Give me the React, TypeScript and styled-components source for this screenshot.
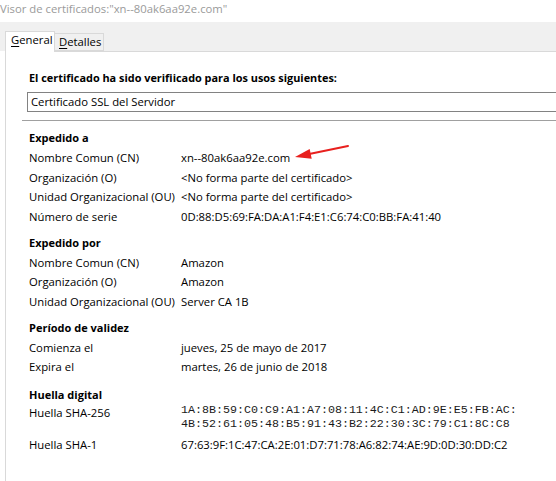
import React from "react";
import styled, { createGlobalStyle } from "styled-components";

const GlobalStyle = createGlobalStyle`
  html, body { margin: 0; padding: 0; background: #ffffff; overflow: hidden; }
  body { font-family: "Open Sans", "Liberation Sans", sans-serif; font-size: 11.3px; color: #000; }
`;

const Window = styled.div`
  position: relative;
  width: 100%;
  height: 481px;
  overflow: hidden;
  display: flex;
  flex-direction: column;
  background: #ffffff;
`;

const TitleBar = styled.div`
  height: 22px;
  line-height: 18px;
  color: #9a9a9a;
  white-space: nowrap;
`;

const TabStrip = styled.div`
  height: 29px;
  background: #f0f0f0;
  display: flex;
  align-items: flex-end;
  padding-left: 5px;
`;

const Tab = styled.div<{ $active?: boolean; $w: number }>`
  position: relative;
  z-index: ${(p) => (p.$active ? 1 : 0)};
  box-sizing: border-box;
  width: ${(p) => p.$w}px;
  height: ${(p) => (p.$active ? 21 : 18)}px;
  margin-bottom: ${(p) => (p.$active ? -1 : 0)}px;
  background: ${(p) => (p.$active ? "#ffffff" : "#f0f0f0")};
  border: 1px solid #d9d9d9;
  border-bottom: ${(p) => (p.$active ? "none" : "1px solid #d9d9d9")};
  border-left: ${(p) => (p.$active ? "1px solid #d9d9d9" : "none")};
  padding-left: ${(p) => (p.$active ? 5 : 4)}px;
  line-height: 16px;
  white-space: nowrap;
  u { text-decoration: underline; text-underline-offset: 2px; }
`;

const Panel = styled.div`
  flex: 1;
  margin-left: 5px;
  border-left: 1px solid #d9d9d9;
  border-top: 1px solid #d9d9d9;
  padding: 16px 0 0 23px;
  display: flex;
  flex-direction: column;
`;

const Purpose = styled.div`
  font-weight: 700;
  font-size: 10.9px;
  line-height: 20px;
  white-space: nowrap;
`;

const PurposeBox = styled.div`
  margin-top: 4px;
  margin-left: -2px;
  height: 20px;
  box-sizing: border-box;
  border: 1px solid #828282;
  border-right: none;
  padding-left: 3px;
  line-height: 18px;
`;

const Divider = styled.div`
  margin-top: 8px;
  margin-left: -7px;
  height: 1px;
  background: #a0a0a0;
`;

const Section = styled.div<{ $top: number }>`
  margin-top: ${(p) => p.$top}px;
  display: flex;
  flex-direction: column;
`;

const Heading = styled.div`
  font-weight: 700;
  font-size: 11px;
  line-height: 20px;
  height: 20px;
`;

const Rows = styled.div<{ $shift?: number }>`
  display: flex;
  flex-direction: column;
  margin-top: ${(p) => p.$shift ?? 0}px;
`;

const Row = styled.div<{ $h?: number }>`
  display: grid;
  grid-template-columns: 152px 1fr;
  align-items: start;
  height: ${(p) => p.$h ?? 19.67}px;
  line-height: 20px;
  white-space: nowrap;
`;

const Label = styled.span``;
const Value = styled.span``;

const Mono = styled.span`
  font-family: "Liberation Mono", "Courier New", monospace;
  font-size: 11.67px;
  line-height: 14px;
  white-space: pre;
  color: #1a1a1a;
`;

const Arrow = styled.svg`
  position: absolute;
  left: 290px;
  top: 140px;
`;

type Item = [string, string];

const issuedTo: Item[] = [
  ["Nombre Comun (CN)", "xn--80ak6aa92e.com"],
  ["Organización (O)", "<No forma parte del certificado>"],
  ["Unidad Organizacional (OU)", "<No forma parte del certificado>"],
  ["Número de serie", "0D:88:D5:69:FA:DA:A1:F4:E1:C6:74:C0:BB:FA:41:40"],
];

const issuedBy: Item[] = [
  ["Nombre Comun (CN)", "Amazon"],
  ["Organización (O)", "Amazon"],
  ["Unidad Organizacional (OU)", "Server CA 1B"],
];

const validity: Item[] = [
  ["Comienza el", "jueves, 25 de mayo de 2017"],
  ["Expira el", "martes, 26 de junio de 2018"],
];

const renderRows = (items: Item[]) =>
  items.map(([l, v]) => (
    <Row key={l}>
      <Label>{l}</Label>
      <Value>{v}</Value>
    </Row>
  ));

export default function App() {
  return (
    <>
      <GlobalStyle />
      <Window>
        <TitleBar>Visor de certificados:"xn--80ak6aa92e.com"</TitleBar>
        <TabStrip>
          <Tab $active $w={50}>
            <u>G</u>eneral
          </Tab>
          <Tab $w={49}>
            <u>D</u>etalles
          </Tab>
        </TabStrip>
        <Panel>
          <Purpose>El certificado ha sido verifiicado para los usos siguientes:</Purpose>
          <PurposeBox>Certificado SSL del Servidor</PurposeBox>
          <Divider />
          <Section $top={7}>
            <Heading>Expedido a</Heading>
            <Rows>{renderRows(issuedTo)}</Rows>
          </Section>
          <Section $top={6}>
            <Heading>Expedido por</Heading>
            <Rows>{renderRows(issuedBy)}</Rows>
          </Section>
          <Section $top={6}>
            <Heading>Período de validez</Heading>
            <Rows>{renderRows(validity)}</Rows>
          </Section>
          <Section $top={8}>
            <Heading>Huella digital</Heading>
            <Rows $shift={-2}>
              <Row $h={32}>
                <Label>Huella SHA-256</Label>
                <Mono>
                  {"1A:8B:59:C0:C9:A1:A7:08:11:4C:C1:AD:9E:E5:FB:AC:\n4B:52:61:05:48:B5:91:43:B2:22:30:3C:79:C1:8C:C8"}
                </Mono>
              </Row>
              <Row>
                <Label>Huella SHA-1</Label>
                <Value>67:63:9F:1C:47:CA:2E:01:D7:71:78:A6:82:74:AE:9D:0D:30:DD:C2</Value>
              </Row>
            </Rows>
          </Section>
        </Panel>
        <Arrow width="64" height="26" viewBox="0 0 64 26">
          <line x1="58" y1="6" x2="18" y2="14.3" stroke="#e8201e" strokeWidth="2" strokeLinecap="round" />
          <polygon points="5,17 21.7,18.8 19.7,9" fill="#e8201e" />
        </Arrow>
      </Window>
    </>
  );
}
